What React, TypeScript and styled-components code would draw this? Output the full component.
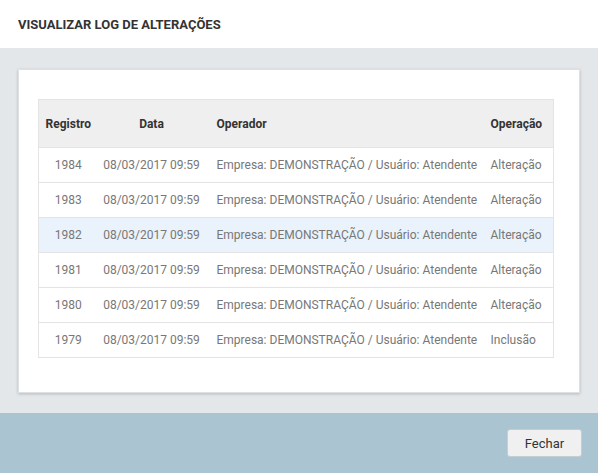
import styled, { createGlobalStyle } from "styled-components";

const Global = createGlobalStyle`
  body { margin: 0; font-family: Roboto, "Liberation Sans", sans-serif; background: #fff; }
`;

const rows = [
  { id: 1984, op: "Alteração" },
  { id: 1983, op: "Alteração" },
  { id: 1982, op: "Alteração", active: true },
  { id: 1981, op: "Alteração" },
  { id: 1980, op: "Alteração" },
  { id: 1979, op: "Inclusão" },
];

const App = () => {
  return (
    <Page>
      <Global />
      <Header>VISUALIZAR LOG DE ALTERAÇÕES</Header>
      <Body>
        <Card>
          <Table>
            <thead>
              <tr>
                <Th $w={59} $align="center">Registro</Th>
                <Th $w={108} $align="center">Data</Th>
                <Th>Operador</Th>
                <Th $w={74}>Operação</Th>
              </tr>
            </thead>
            <tbody>
              {rows.map((r) => (
                <Row key={r.id} $active={r.active}>
                  <Td $align="center">{r.id}</Td>
                  <Td $align="center">08/03/2017 09:59</Td>
                  <Td>Empresa: DEMONSTRAÇÃO / Usuário: Atendente</Td>
                  <Td>{r.op}</Td>
                </Row>
              ))}
            </tbody>
          </Table>
        </Card>
      </Body>
      <Footer>
        <Button>Fechar</Button>
      </Footer>
    </Page>
  );
};

const Page = styled.div`
  width: 598px;
  height: 473px;
  display: flex;
  flex-direction: column;
`;

const Header = styled.div`
  height: 48px;
  padding-left: 18px;
  display: flex;
  align-items: center;
  font-size: 13px;
  font-weight: 700;
  color: #333;
`;

const Body = styled.div`
  height: 365px;
  box-sizing: border-box;
  background: #e3e7ea;
  padding: 21px 18px 0 18px;
`;

const Card = styled.div`
  width: 562px;
  height: 324px;
  box-sizing: border-box;
  background: #fff;
  border: 1px solid #dde1e4;
  box-shadow: 0 1px 3px rgba(0, 0, 0, 0.2);
  padding: 29px 0 0 19px;
`;

const Table = styled.table`
  width: 516px;
  border-collapse: collapse;
  font-size: 12px;
  border: 1px solid #e4e4e4;
`;

const Th = styled.th<{ $w?: number; $align?: string }>`
  height: 48px;
  padding: 0 0 0 ${(p) => (p.$align === "center" ? 0 : 11)}px;
  width: ${(p) => (p.$w ? `${p.$w}px` : "auto")};
  text-align: ${(p) => p.$align || "left"};
  background: #efefef;
  color: #333;
  font-weight: 700;
  box-sizing: border-box;
`;

const Row = styled.tr<{ $active?: boolean }>`
  background: ${(p) => (p.$active ? "#eaf2fb" : "#fff")};
  border-top: 1px solid #e4e4e4;
`;

const Td = styled.td<{ $align?: string }>`
  height: 34px;
  padding: 0 0 0 ${(p) => (p.$align === "center" ? 0 : 11)}px;
  text-align: ${(p) => p.$align || "left"};
  color: #777;
  white-space: nowrap;
`;

const Footer = styled.div`
  flex: 1;
  background: #abc4d1;
  display: flex;
  justify-content: flex-end;
  align-items: center;
  padding-right: 16px;
`;

const Button = styled.button`
  width: 75px;
  height: 28px;
  background: #f0f0f0;
  border: 1px solid #c4cdd2;
  border-radius: 3px;
  font-family: Roboto, "Liberation Sans", sans-serif;
  font-size: 13px;
  color: #333;
`;

export default App;
